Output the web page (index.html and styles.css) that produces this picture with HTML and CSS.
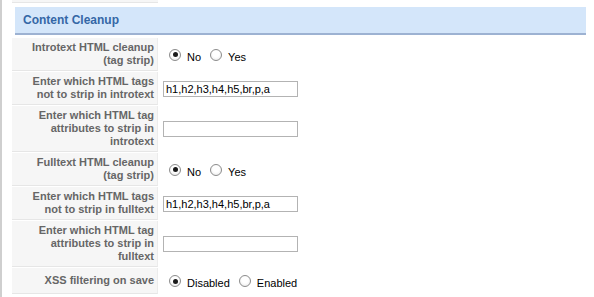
FILE: index.html
```html
<!DOCTYPE html>
<html lang="en">
<head>
    <meta charset="UTF-8">
    <meta name="viewport" content="width=device-width, initial-scale=1.0">
    <title>Content Cleanup</title>
    <link rel="stylesheet" href="styles.css">
</head>
<body>
    <div class="panel">
        <div class="prev-row"></div>

        <h3 class="pane-title">Content Cleanup</h3>

        <table class="admintable">
            <tr>
                <td class="key">Introtext HTML cleanup (tag strip)</td>
                <td class="value">
                    <div class="radios">
                        <label><input type="radio" name="introclean" checked><span>No</span></label>
                        <label><input type="radio" name="introclean"><span>Yes</span></label>
                    </div>
                </td>
            </tr>
            <tr>
                <td class="key">Enter which HTML tags not to strip in introtext</td>
                <td class="value"><input type="text" class="text" value="h1,h2,h3,h4,h5,br,p,a"></td>
            </tr>
            <tr>
                <td class="key">Enter which HTML tag attributes to strip in introtext</td>
                <td class="value"><input type="text" class="text" value=""></td>
            </tr>
            <tr>
                <td class="key">Fulltext HTML cleanup (tag strip)</td>
                <td class="value">
                    <div class="radios">
                        <label><input type="radio" name="fullclean" checked><span>No</span></label>
                        <label><input type="radio" name="fullclean"><span>Yes</span></label>
                    </div>
                </td>
            </tr>
            <tr>
                <td class="key">Enter which HTML tags not to strip in fulltext</td>
                <td class="value"><input type="text" class="text" value="h1,h2,h3,h4,h5,br,p,a"></td>
            </tr>
            <tr>
                <td class="key">Enter which HTML tag attributes to strip in fulltext</td>
                <td class="value"><input type="text" class="text" value=""></td>
            </tr>
            <tr>
                <td class="key">XSS filtering on save</td>
                <td class="value">
                    <div class="radios">
                        <label><input type="radio" name="xss" checked><span>Disabled</span></label>
                        <label><input type="radio" name="xss"><span>Enabled</span></label>
                    </div>
                </td>
            </tr>
        </table>
    </div>
</body>
</html>
```

FILE: styles.css
```css
body { margin: 0; font-family: "Liberation Sans", Arial, sans-serif; font-size: 11px; color: #000; background: #fff; }
.panel { height: 297px; overflow: hidden; border-left: 2px solid #cfcfcf; padding: 0 8px 0 9px; }
.prev-row { width: 146px; height: 2px; margin-left: 1px; background: #f6f6f6; border-bottom: 1px solid #e6e6e6; }
.pane-title { margin: 4px 0 0 4px; height: 26px; line-height: 26px; padding-left: 8px; background: #d4e6fa; border-bottom: 2px solid #9db2d2; color: #3467a6; font-size: 12px; font-weight: bold; }
.admintable { border-spacing: 1px; margin-top: 2px; }
.admintable td { padding: 3px; line-height: 13px; vertical-align: middle; }
.admintable td.key { width: 139px; background: #f6f6f6; border-bottom: 1px solid #e6e6e6; border-right: 1px solid #ececec; color: #666; font-weight: bold; text-align: right; }
.admintable td.value { padding-left: 4px; }
input.text { box-sizing: border-box; width: 135px; height: 16px; margin: 0; padding: 0 2px; border: 1px solid #b3b3b3; font-family: "Liberation Sans", Arial, sans-serif; font-size: 11px; color: #000; }
.radios { display: flex; align-items: center; height: 20px; }
.radios label { display: flex; align-items: center; margin-right: 3px; }
.radios span { margin-top: 5px; }
.radios input { appearance: none; -webkit-appearance: none; box-sizing: border-box; width: 12px; height: 12px; margin: 0 6px; border: 1px solid #8c8c8c; border-radius: 50%; background: radial-gradient(circle at 50% 40%, #fff 40%, #e4e4e4 100%); display: flex; align-items: center; justify-content: center; }
.radios input:checked::after { content: ""; width: 5px; height: 5px; border-radius: 50%; background: #1a1a1a; }
```
